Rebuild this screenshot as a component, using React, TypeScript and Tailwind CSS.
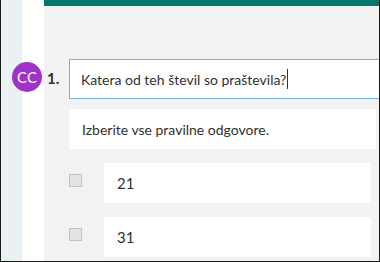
import React from 'react';

const options = ['21', '31'];

export default function App() {
  return (
    <div className="relative flex w-[380px] h-[262px] border-l border-r border-b border-[#1a1a1a] overflow-hidden font-['Lato',sans-serif] text-[#323130]">
      {/* side strips */}
      <div className="w-[21px] bg-[#e9f1f4]"></div>
      <div className="w-[22px] bg-white"></div>

      {/* form body */}
      <div className="relative flex-1 flex flex-col bg-[#f2f2f2]">
        <div className="h-[6px] bg-[#077568]"></div>

        {/* question */}
        <div className="relative flex mt-[53px]">
          <div className="absolute left-[-32px] top-[3px] w-[30px] h-[30px] rounded-full bg-[#a033c7] flex items-center justify-center text-white text-[15px] leading-none">
            CC
          </div>
          <span className="w-[25px] pl-[3px] pt-[9px] text-[15px] font-bold leading-[20px]">1.</span>
          <div className="flex-1 h-[40px] border border-r-0 border-[#71afe5] bg-white flex items-center pl-[11px] text-[14px]">
            Katera od teh števil so praštevila?
            <span className="inline-block w-px h-[20px] bg-[#323130] ml-px"></span>
          </div>
        </div>

        <div className="ml-[25px] mr-[3px] mt-[10px] h-[40px] bg-white flex items-center pl-[13px] text-[14px]">
          Izberite vse pravilne odgovore.
        </div>

        <div className="flex flex-col gap-[14px] mt-[14px]">
          {options.map((o) => (
            <div key={o} className="flex items-start ml-[25px]">
              <div className="mt-[11px] w-[13px] h-[13px] border border-[#c2c2c2] bg-[#e3e3e3]"></div>
              <div className="ml-[22px] mr-[8px] flex-1 h-[40px] bg-white flex items-center pl-[13px] text-[15px]">
                {o}
              </div>
            </div>
          ))}
        </div>
      </div>
    </div>
  );
}
